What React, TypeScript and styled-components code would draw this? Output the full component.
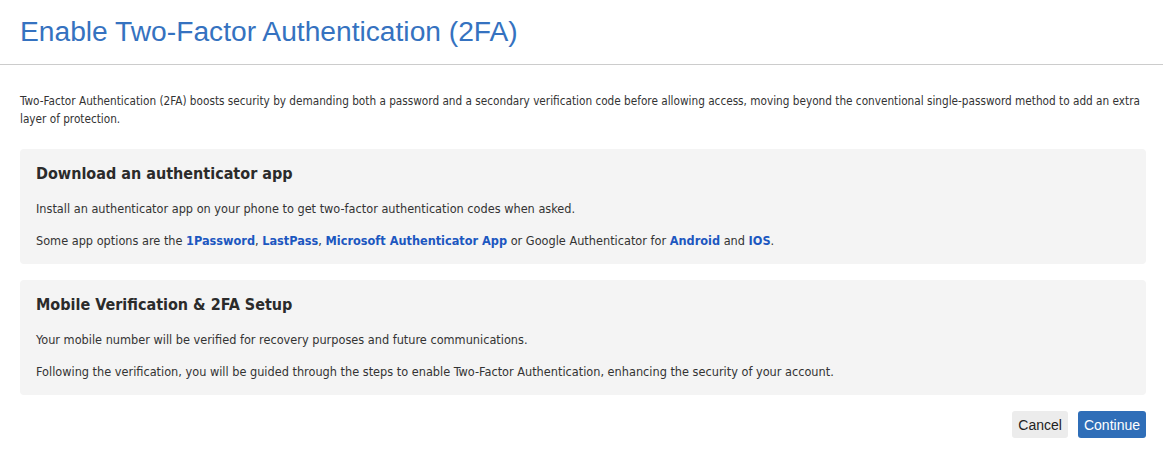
import React from "react";
import styled, { createGlobalStyle } from "styled-components";

const Global = createGlobalStyle`
  html, body { margin: 0; padding: 0; background: #fff; }
  body { font-family: "DejaVu Sans Condensed", "DejaVu Sans", sans-serif; color: #333; }
  * { box-sizing: border-box; }
`;

const Page = styled.div`
  display: flex;
  flex-direction: column;
`;

const Header = styled.header`
  height: 65px;
  padding: 0 20px;
  display: flex;
  align-items: center;
  border-bottom: 1px solid #cccccc;
`;

const Title = styled.h1`
  margin: 0;
  padding-bottom: 2px;
  font-family: "Liberation Sans", Arial, sans-serif;
  font-weight: 400;
  font-size: 28.2px;
  color: #3572c0;
`;

const Body = styled.main`
  padding: 27px 17px 0 20px;
  display: flex;
  flex-direction: column;
  gap: 16px;
`;

const Intro = styled.p`
  margin: 0 0 5px;
  font-size: 11.7px;
  line-height: 18px;
  color: #333;
`;

const Card = styled.section`
  background: #f4f4f4;
  border-radius: 4px;
  padding: 15px 16px 14px;
  display: flex;
  flex-direction: column;
  gap: 14px;
`;

const CardTitle = styled.h2`
  margin: 0 0 2px;
  font-size: 16px;
  line-height: 20px;
  font-weight: 700;
  color: #2b2b2b;
`;

const Text = styled.p`
  margin: 0;
  font-size: 12.6px;
  line-height: 18px;
  color: #333;
`;

const Link = styled.a`
  color: #1c57c0;
  font-weight: 700;
  text-decoration: none;
`;

const Actions = styled.div`
  display: flex;
  justify-content: flex-end;
  gap: 10px;
`;

const Button = styled.button<{ $primary?: boolean }>`
  height: 27px;
  padding: 0 6px;
  border: none;
  border-radius: 3px;
  font-family: "Liberation Sans", Arial, sans-serif;
  font-size: 14px;
  cursor: pointer;
  background: ${(p) => (p.$primary ? "#2f6eb8" : "#ececec")};
  color: ${(p) => (p.$primary ? "#fff" : "#222")};
`;

export default function App() {
  return (
    <Page>
      <Global />
      <Header>
        <Title>Enable Two-Factor Authentication (2FA)</Title>
      </Header>
      <Body>
        <Intro>
          Two-Factor Authentication (2FA) boosts security by demanding both a password and a secondary
          verification code before allowing access, moving beyond the conventional single-password method to
          add an extra layer of protection.
        </Intro>
        <Card>
          <CardTitle>Download an authenticator app</CardTitle>
          <Text>Install an authenticator app on your phone to get two-factor authentication codes when asked.</Text>
          <Text>
            Some app options are the <Link href="#">1Password</Link>, <Link href="#">LastPass</Link>,{" "}
            <Link href="#">Microsoft Authenticator App</Link> or Google Authenticator for{" "}
            <Link href="#">Android</Link> and <Link href="#">IOS</Link>.
          </Text>
        </Card>
        <Card>
          <CardTitle>Mobile Verification &amp; 2FA Setup</CardTitle>
          <Text>Your mobile number will be verified for recovery purposes and future communications.</Text>
          <Text>
            Following the verification, you will be guided through the steps to enable Two-Factor Authentication,
            enhancing the security of your account.
          </Text>
        </Card>
        <Actions>
          <Button>Cancel</Button>
          <Button $primary>Continue</Button>
        </Actions>
      </Body>
    </Page>
  );
}
